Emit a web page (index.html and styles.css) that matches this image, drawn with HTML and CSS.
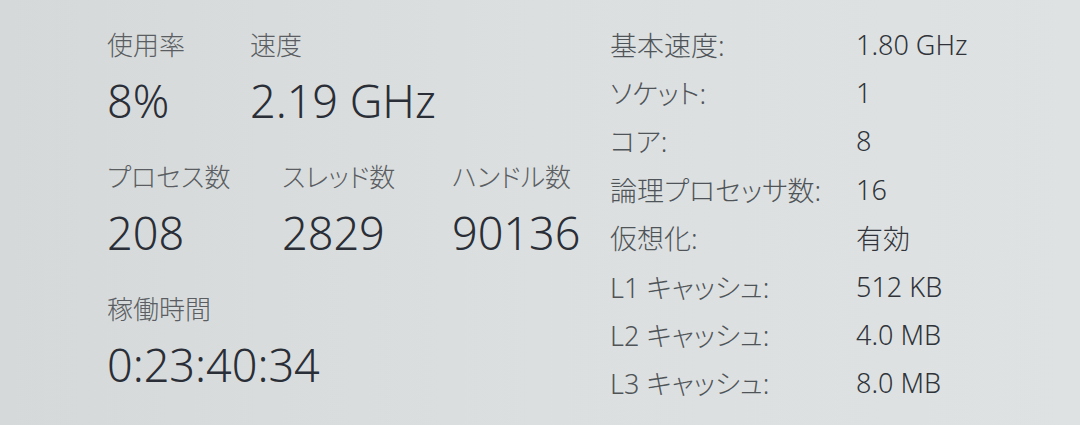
FILE: index.html
```html
<!DOCTYPE html>
<html lang="ja">
<head>
<meta charset="utf-8">
<title>CPU</title>
<link rel="stylesheet" href="styles.css">
</head>
<body>
<main class="panel">
  <section class="left">
    <div class="group g2">
      <div class="label">使用率</div>
      <div class="label">速度</div>
      <div class="value">8%</div>
      <div class="value">2.19 GHz</div>
    </div>
    <div class="group g3">
      <div class="label">プロセス数</div>
      <div class="label">スレッド数</div>
      <div class="label">ハンドル数</div>
      <div class="value">208</div>
      <div class="value">2829</div>
      <div class="value">90136</div>
    </div>
    <div class="group g1">
      <div class="label">稼働時間</div>
      <div class="value">0:23:40:34</div>
    </div>
  </section>
  <section class="right">
    <div class="k">基本速度:</div><div class="v">1.80 GHz</div>
    <div class="k">ソケット:</div><div class="v">1</div>
    <div class="k">コア:</div><div class="v">8</div>
    <div class="k">論理プロセッサ数:</div><div class="v">16</div>
    <div class="k">仮想化:</div><div class="v">有効</div>
    <div class="k">L1 キャッシュ:</div><div class="v">512 KB</div>
    <div class="k">L2 キャッシュ:</div><div class="v">4.0 MB</div>
    <div class="k">L3 キャッシュ:</div><div class="v">8.0 MB</div>
  </section>
</main>
</body>
</html>
```
FILE: styles.css
```css
html, body {
  margin: 0;
  padding: 0;
  width: 1080px;
  height: 425px;
  overflow: hidden;
}
body {
  background: linear-gradient(90deg, #d6d9da 0%, #dcdfe0 50%, #dfe2e2 100%);
  font-family: "Noto Sans", "Noto Sans CJK JP", sans-serif;
  font-feature-settings: "palt";
}
.panel {
  display: flex;
  height: 425px;
}
.left {
  width: 503px;
  padding: 30px 0 0 107px;
  display: flex;
  flex-direction: column;
  gap: 36px;
}
.group {
  display: grid;
  row-gap: 16px;
}
.g2 { grid-template-columns: 143px auto; }
.g3 { grid-template-columns: 175px 170px auto; }
.g1 { grid-template-columns: auto; }
.label {
  font-size: 26px;
  line-height: 30px;
  font-weight: 300;
  color: #5a5e62;
  white-space: nowrap;
}
.value {
  font-size: 45px;
  line-height: 50px;
  font-weight: 300;
  color: #2a2e36;
  white-space: nowrap;
}
.right {
  padding: 20px 0 0 0;
  display: grid;
  grid-template-columns: 246px auto;
  grid-auto-rows: 48.4px;
  align-items: center;
  align-content: start;
}
.k {
  font-size: 27px;
  font-weight: 300;
  color: #4f5458;
  white-space: nowrap;
}
.v {
  font-size: 27px;
  font-weight: 300;
  color: #30343a;
  white-space: nowrap;
}
```
